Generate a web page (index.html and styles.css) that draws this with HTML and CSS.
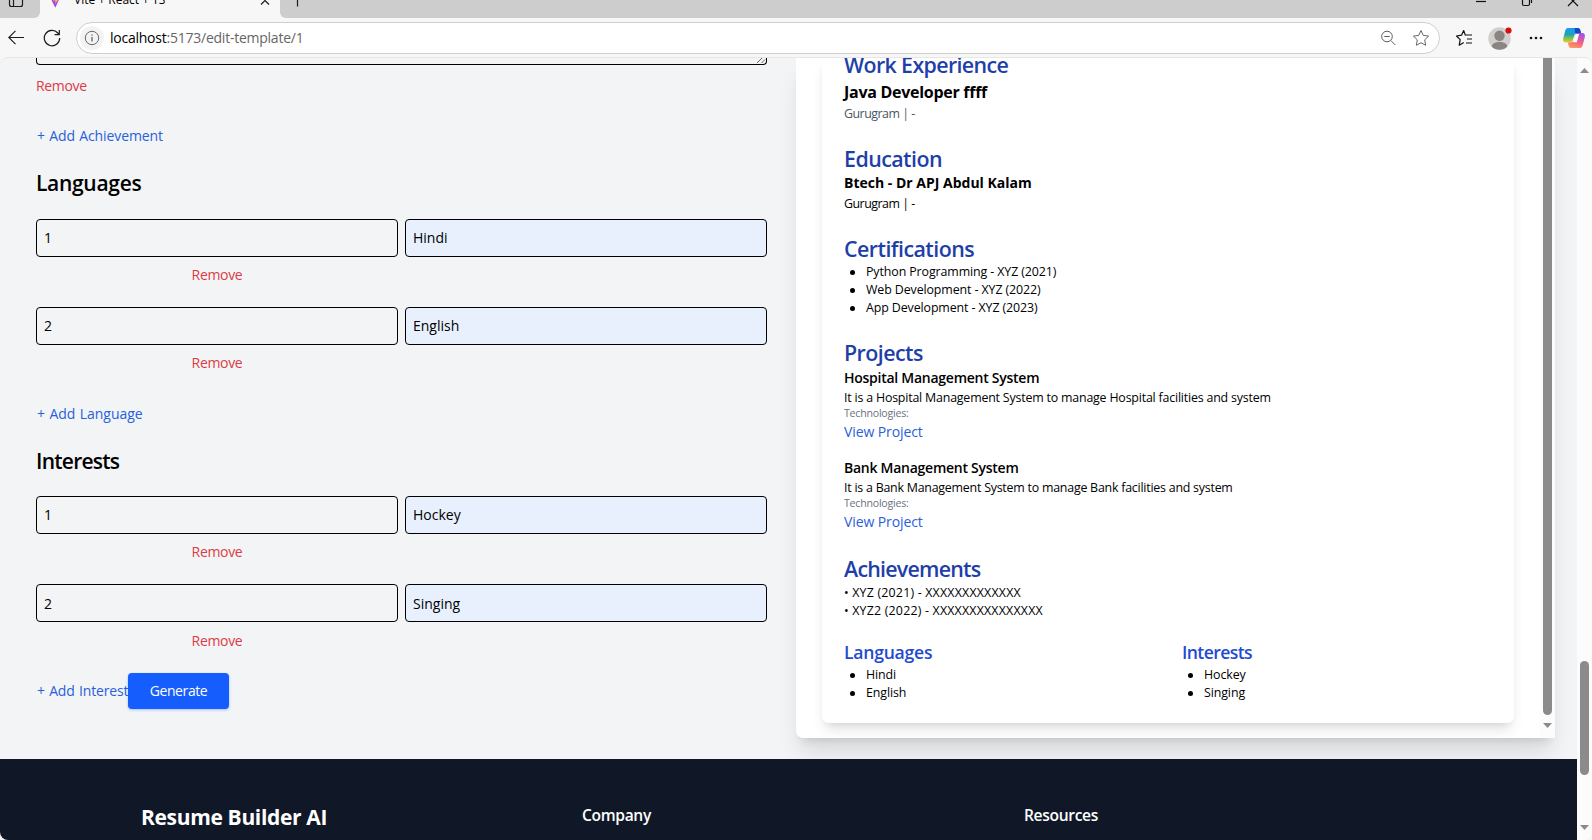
FILE: index.html
```
<!DOCTYPE html>
<html lang="en">
<head>
<meta charset="utf-8">
<title>Vite + React + TS</title>
<link rel="stylesheet" href="styles.css">
</head>
<body>
<div class="browser">
  <div class="tabs">
    <div class="strip strip-left">
      <svg width="40" height="36" viewBox="0 0 40 36" fill="none" stroke="#1b1b1b" stroke-width="1.2"><rect x="9.5" y="11.5" width="13" height="13" rx="2"/><path d="M9.5 15.500h13M13.500 15.500v9"/></svg>
    </div>
    <div class="tab">
      <svg class="favicon" width="14" height="36" viewBox="0 0 14 36"><defs><linearGradient id="v" x1="0" y1="0" x2="0" y2="1"><stop offset="0" stop-color="#41b6ff"/><stop offset=".6" stop-color="#a244f2"/><stop offset="1" stop-color="#bd34fe"/></linearGradient></defs><path d="M.5 12 7 10.500l6.500 1.500L7.300 25.800Z" fill="url(#v)"/><path d="m5 10 4-1-.5 8h2l-3.300 5 .3-3.500H5Z" fill="#ffbd2f"/></svg>
      <span class="tab-title">Vite + React + TS</span>
      <svg width="10" height="36" viewBox="0 0 10 36" fill="none" stroke="#1b1b1b" stroke-width="1.200"><path d="m1 14.500 8 8M9 14.500l-8 8"/></svg>
    </div>
    <div class="strip strip-right">
      <svg width="14" height="36" viewBox="0 0 14 36" stroke="#1b1b1b" stroke-width="1.200"><path d="M7.500 12v12.500M1.500 17.200h12"/></svg>
      <svg class="window" width="106" height="36" viewBox="0 0 106 36" fill="none" stroke="#111" stroke-width="1.200"><path d="M1 19.500h10"/><rect x="47.500" y="15.500" width="7" height="8" rx="1.500"/><path d="M50 13.500h4.500a2 2 0 0 1 2 2v5.500M93 14l10 10M103 14 93 24"/></svg>
    </div>
  </div>
  <div class="toolbar">
    <svg class="back" width="16" height="16" viewBox="0 0 16 16" fill="none" stroke="#1b1b1b" stroke-width="1.100"><path d="M16 7.500H.8M7.500.8.8 7.500l6.700 6.700"/></svg>
    <svg class="reload" width="18" height="18" viewBox="0 0 18 18" fill="none" stroke="#1b1b1b" stroke-width="1.200"><path d="M16.700 9A7.700 7.700 0 1 1 14.800 4L16 5.500M16.300 1v4.700h-4.700"/></svg>
    <div class="address">
      <span class="info"><svg width="16" height="16" viewBox="0 0 16 16" fill="none" stroke="#666"><circle cx="8" cy="8" r="6.700"/><path d="M8 7v4.500M8 4.500v1.300" stroke-width="1.300"/></svg></span>
      <span class="url">localhost<i>:5173/edit-template/1</i></span>
      <svg class="zoom" width="16" height="16" viewBox="0 0 16 16" fill="none" stroke="#5c5c5c"><circle cx="7" cy="6.500" r="5.300"/><path d="M4.300 6.500h5.400M10.800 10.500l4.500 4.500"/></svg>
      <svg class="star" width="18" height="18" viewBox="0 0 18 18" fill="none" stroke="#666" stroke-linejoin="round"><path d="m9 1.500 2.300 4.900 5.300.7-3.900 3.700 1 5.500L9 13.700l-4.700 2.600 1-5.500L1.400 7.100l5.300-.7Z"/></svg>
    </div>
    <svg class="favs" width="18" height="18" viewBox="0 0 18 18" fill="none" stroke="#111" stroke-width="1.200" stroke-linejoin="round"><path d="M11.300 6.200 10.200 5.900 8.700 1.500 6.500 6.200 1.500 7l3.700 3.600-1 5.600 4.500-2.700M10.500 6h6.500M12 10h5M11 14h6"/></svg>
    <svg class="profile" width="24" height="24" viewBox="0 0 24 24"><defs><clipPath id="p"><circle cx="11.500" cy="12.500" r="11.200"/></clipPath></defs><circle cx="11.500" cy="12.500" r="11.200" fill="#d2d0ce"/><g clip-path="url(#p)" fill="#8a8582"><circle cx="11.500" cy="9.700" r="5.200"/><ellipse cx="11.500" cy="21" rx="8" ry="5.200"/></g><circle cx="20.500" cy="4.500" r="3.100" fill="#d90d0d"/></svg>
    <svg class="dots" width="14" height="4" viewBox="0 0 14 4" fill="#111"><circle cx="2" cy="2" r="1.300"/><circle cx="7" cy="2" r="1.300"/><circle cx="12" cy="2" r="1.300"/></svg>
    <svg class="copilot" width="24" height="22" viewBox="0 0 24 22"><defs><linearGradient id="a" x1="0" y1="0" x2="0" y2="1"><stop offset="0" stop-color="#1a9cf0"/><stop offset=".45" stop-color="#1ca5b8"/><stop offset=".75" stop-color="#8ec63f"/><stop offset="1" stop-color="#f4c52b"/></linearGradient><linearGradient id="b" x1=".6" y1="0" x2=".3" y2="1"><stop offset="0" stop-color="#9a55ef"/><stop offset=".5" stop-color="#ef5a8c"/><stop offset="1" stop-color="#ff9a5c"/></linearGradient></defs><path d="M6 1h10c1.300 0 2 1 2.400 2.400L19 6h-3.500c-1.800 0-2.700.8-3.200 2.500L10 15.500H4C1.500 15.500.6 13.800 1.200 11.500l2-7.700C3.700 2 4.500 1 6 1Z" fill="url(#a)"/><path d="M12.500 1H16c1.300 0 2 1 2.400 2.400L19 6h-3.500c-1 0-1.700.3-2.200.8Z" fill="#1746c4"/><path d="M18 21H9c-1.400 0-2-.8-2.400-2.200L6 15.500h2.800c1.800 0 2.700-.8 3.200-2.500l2.200-7H20c2.500 0 3.400 1.700 2.800 4l-2 7.700C20.300 19.800 19.500 21 18 21Z" fill="url(#b)"/><path d="M13.700 7h3.400l-2.300 8.200h-3.700Z" fill="#fff"/></svg>
  </div>
  <div class="viewport">
    <div class="page">
      <main class="main">
        <section class="form">
          <div class="textarea"><svg width="9" height="9" viewBox="0 0 9 9" stroke="#555" stroke-width=".9"><path d="M0 8 8 0M4.500 8 8 4.500"/></svg></div>
          <div class="remove remove-first">Remove</div>
          <div class="add add-ach">+ Add Achievement</div>
          <h2 class="title">Languages</h2>
          <div class="row"><div class="input">1</div><div class="input filled">Hindi</div><div class="remove">Remove</div></div>
          <div class="row"><div class="input">2</div><div class="input filled">English</div><div class="remove">Remove</div></div>
          <div class="add add-lang">+ Add Language</div>
          <h2 class="title title-int">Interests</h2>
          <div class="row"><div class="input">1</div><div class="input filled">Hockey</div><div class="remove">Remove</div></div>
          <div class="row row-last"><div class="input">2</div><div class="input filled">Singing</div><div class="remove">Remove</div></div>
          <div class="actions"><span class="add add-int">+ Add Interest</span><span class="generate">Generate</span></div>
        </section>
        <section class="preview">
          <div class="scroller">
            <article class="resume">
              <h2 class="head work">Work Experience</h2>
              <h3 class="job">Java Developer ffff</h3>
              <p class="small place muted">Gurugram | -</p>
              <h2 class="head">Education</h2>
              <h3 class="degree">Btech - Dr APJ Abdul Kalam</h3>
              <p class="small place">Gurugram | -</p>
              <h2 class="head cert">Certifications</h2>
              <ul class="small list certs"><li>Python Programming - XYZ (2021)</li><li>Web Development - XYZ (2022)</li><li>App Development - XYZ (2023)</li></ul>
              <h2 class="head proj">Projects</h2>
              <div class="project"><h3 class="name">Hospital Management System</h3><p class="small desc">It is a Hospital Management System to manage Hospital facilities and system</p><p class="tech">Technologies:</p><a class="view">View Project</a></div>
              <div class="project"><h3 class="name">Bank Management System</h3><p class="small desc desc-bank">It is a Bank Management System to manage Bank facilities and system</p><p class="tech">Technologies:</p><a class="view">View Project</a></div>
              <h2 class="head ach">Achievements</h2>
              <div class="small awards"><p>• XYZ (2021) - XXXXXXXXXXXXX</p><p>• XYZ2 (2022) - XXXXXXXXXXXXXXX</p></div>
              <div class="cols">
                <div><h3 class="sub">Languages</h3><ul class="small list"><li>Hindi</li><li>English</li></ul></div>
                <div><h3 class="sub sub-int">Interests</h3><ul class="small list"><li>Hockey</li><li>Singing</li></ul></div>
              </div>
            </article>
          </div>
          <div class="bar bar-inner"><div class="thumb"></div><div class="down"></div></div>
        </section>
      </main>
      <footer class="footer"><h2 class="brand">Resume Builder AI</h2><h3 class="foot">Company</h3><h3 class="foot">Resources</h3></footer>
    </div>
    <div class="bar bar-page"><div class="up"></div><div class="thumb"></div><div class="down"></div></div>
  </div>
</div>
</body>
</html>
```
FILE: styles.css
```
* { box-sizing: border-box; margin: 0; padding: 0; }
body { font-family: "Open Sans", "Noto Sans", sans-serif; color: #000; background: #f7f7f7; overflow: hidden; }
svg { display: block; flex: none; }
.browser { width: 1592px; height: 840px; display: flex; flex-direction: column; background: #f7f7f7; overflow: hidden; }

.tabs { display: flex; height: 18px; overflow: hidden; flex: none; }
.tabs svg { margin-top: -18px; }
.strip { background: #cdcdcd; height: 18px; overflow: hidden; }
.strip-left { width: 40px; border-bottom-right-radius: 6px; }
.strip-right { flex: 1; display: flex; justify-content: space-between; border-bottom-left-radius: 6px; padding: 0 11px 0 10px; }
.tab { width: 240px; display: flex; padding: 0 10px 0 8px; }
.tab-title { flex: 1; margin: -18px 0 0 12px; font-size: 12px; line-height: 35px; }

.toolbar { display: flex; align-items: center; height: 39px; padding-left: 8px; flex: none; }
.reload { margin-left: 19px; }
.address { width: 1364px; height: 32px; margin-left: 15px; display: flex; align-items: center; background: #fff; border: 1px solid #cfcfcf; border-radius: 16px; padding-left: 3px; }
.info { width: 24px; height: 24px; border-radius: 12px; background: #f3f3f3; display: flex; align-items: center; justify-content: center; }
.url { flex: 1; margin-left: 6px; font-size: 14px; line-height: 20px; letter-spacing: -.24px; }
.url i { font-style: normal; color: #666; }
.star { margin: 0 9px 0 16px; }
.favs { margin-left: 15px; }
.profile { margin-left: 15px; }
.dots { margin-left: 17px; }
.copilot { margin-left: 19px; }

.viewport { flex: 1; display: flex; border-top: 1px solid #e4e6e8; border-radius: 8px; overflow: hidden; background: #f3f4f6; }
.page { width: 1577px; display: flex; flex-direction: column; }
.main { height: 701px; display: flex; overflow: hidden; background: #f3f4f6; flex: none; }
.form { width: 796px; padding-left: 36px; flex: none; }
.textarea { width: 731px; height: 7px; border: 1px solid #000; border-top: 0; border-radius: 0 0 4px 4px; display: flex; justify-content: flex-end; align-items: flex-end; overflow: hidden; }
.remove, .add { font-size: 14px; line-height: 20px; color: #dc3c45; letter-spacing: -.33px; }
.add { color: #2860dc; letter-spacing: -.1px; word-spacing: .8px; padding-left: 1px; }
.remove-first { margin-top: 11px; }
.add-ach { margin-top: 30px; }
.add-lang { margin-top: 31px; letter-spacing: -.02px; }
.title { margin: 23px 0 22px; font-size: 21px; line-height: 28px; font-weight: 600; letter-spacing: -.3px; }
.title-int { margin-bottom: 21px; letter-spacing: -.75px; }
.row { display: grid; grid-template-columns: 362px 362px; column-gap: 7px; row-gap: 8px; }
.row + .row { margin-top: 22px; }
.row-last .input { line-height: 38px; }
.row-last { row-gap: 9px; }
.input { height: 38px; border: 1px solid #000; border-radius: 4px; padding-left: 7px; font-size: 14px; line-height: 36px; }
.filled { background: #e8f0fe; }
.row .remove { text-align: center; }
.actions { display: flex; align-items: center; margin-top: 22px; }
.add-int { width: 92px; letter-spacing: -.15px; white-space: nowrap; }
.generate { width: 101px; height: 36px; line-height: 36px; border-radius: 4px; background: #155dfc; color: #fff; font-size: 14px; font-weight: 500; letter-spacing: -.4px; text-align: center; box-shadow: 0 1px 3px rgba(21,93,252,.35); }

.preview { width: 759px; height: 680px; display: flex; background: #fff; border-bottom-left-radius: 7px; box-shadow: 0 18px 22px -4px rgba(0,0,0,.11), 0 7px 9px -5px rgba(0,0,0,.11); flex: none; }
.scroller { flex: 1; overflow: hidden; padding-left: 26px; border-bottom-left-radius: 7px; }
.resume { width: 692px; height: 665px; padding: 0 22px; border-radius: 0 0 7px 7px; background: #fff; box-shadow: 0 9px 14px -3px rgba(0,0,0,.12), 0 4px 6px -4px rgba(0,0,0,.1); display: flow-root; }
.head { margin-top: 22px; font-size: 21.4px; line-height: 27px; font-weight: 600; color: #1e3fa8; letter-spacing: -.55px; }
.work { margin-top: -7px; letter-spacing: -.64px; }
.ach { margin-top: 23px; letter-spacing: -.76px; }
.job { margin-top: 3px; font-size: 16px; line-height: 22px; letter-spacing: -.28px; }
.small { font-size: 12.4px; line-height: 18px; letter-spacing: -.1px; }
.place { margin-top: 2px; letter-spacing: -.5px; }
.muted { color: #4a5565; }
.degree { font-size: 14px; line-height: 21px; }
.list { padding-left: 6px; margin-top: 1px; list-style: none; }
.list li { display: flex; align-items: center; }
.list li::before { content: ""; width: 5px; height: 5px; margin-right: 11px; border-radius: 50%; background: #000; }
.project { display: flex; flex-direction: column; height: 74px; margin-top: 2px; }
.project + .project { margin-top: 16px; }
.name { font-size: 14px; line-height: 20px; font-weight: 600; letter-spacing: -.26px; }
.desc { margin-top: 1px; line-height: 17px; letter-spacing: -.19px; }
.desc-bank { letter-spacing: -.225px; }
.tech { font-size: 10.6px; line-height: 14px; letter-spacing: -.22px; color: #6a7282; }
.view { margin-top: 2px; font-size: 14px; line-height: 20px; letter-spacing: -.1px; color: #2860dc; }
.awards { margin-top: 2px; letter-spacing: .195px; }
.cols { margin-top: 20px; display: grid; grid-template-columns: 338px 1fr; }
.cols .list { margin-top: 2px; }
.sub { font-size: 17.6px; line-height: 24px; font-weight: 600; color: #1f4bd0; letter-spacing: -.25px; }
.sub-int { letter-spacing: -.6px; }

.bar { width: 15px; display: flex; flex-direction: column; align-items: center; background: #fcfcfc; flex: none; }
.thumb { width: 9px; background: #8b8b8b; border-radius: 5px; }
.bar-inner .thumb { height: 657px; border-radius: 0 0 5px 5px; margin-bottom: 8px; }
.bar-page { padding-top: 10px; }
.bar-page .thumb { height: 114px; margin: 588px 0 50px; }
.up, .down { width: 9px; height: 5px; background: #8b8b8b; clip-path: polygon(0 0, 100% 0, 50% 100%); }
.up { clip-path: polygon(0 100%, 100% 100%, 50% 0); }

.footer { flex: 1; display: grid; grid-template-columns: 441px 442px 1fr; padding: 44px 0 0 141px; background: #101828; color: #fff; }
.brand { font-size: 21px; line-height: 28px; letter-spacing: -.34px; }
.foot { font-size: 15.6px; line-height: 25px; font-weight: 600; letter-spacing: -.34px; }
```
